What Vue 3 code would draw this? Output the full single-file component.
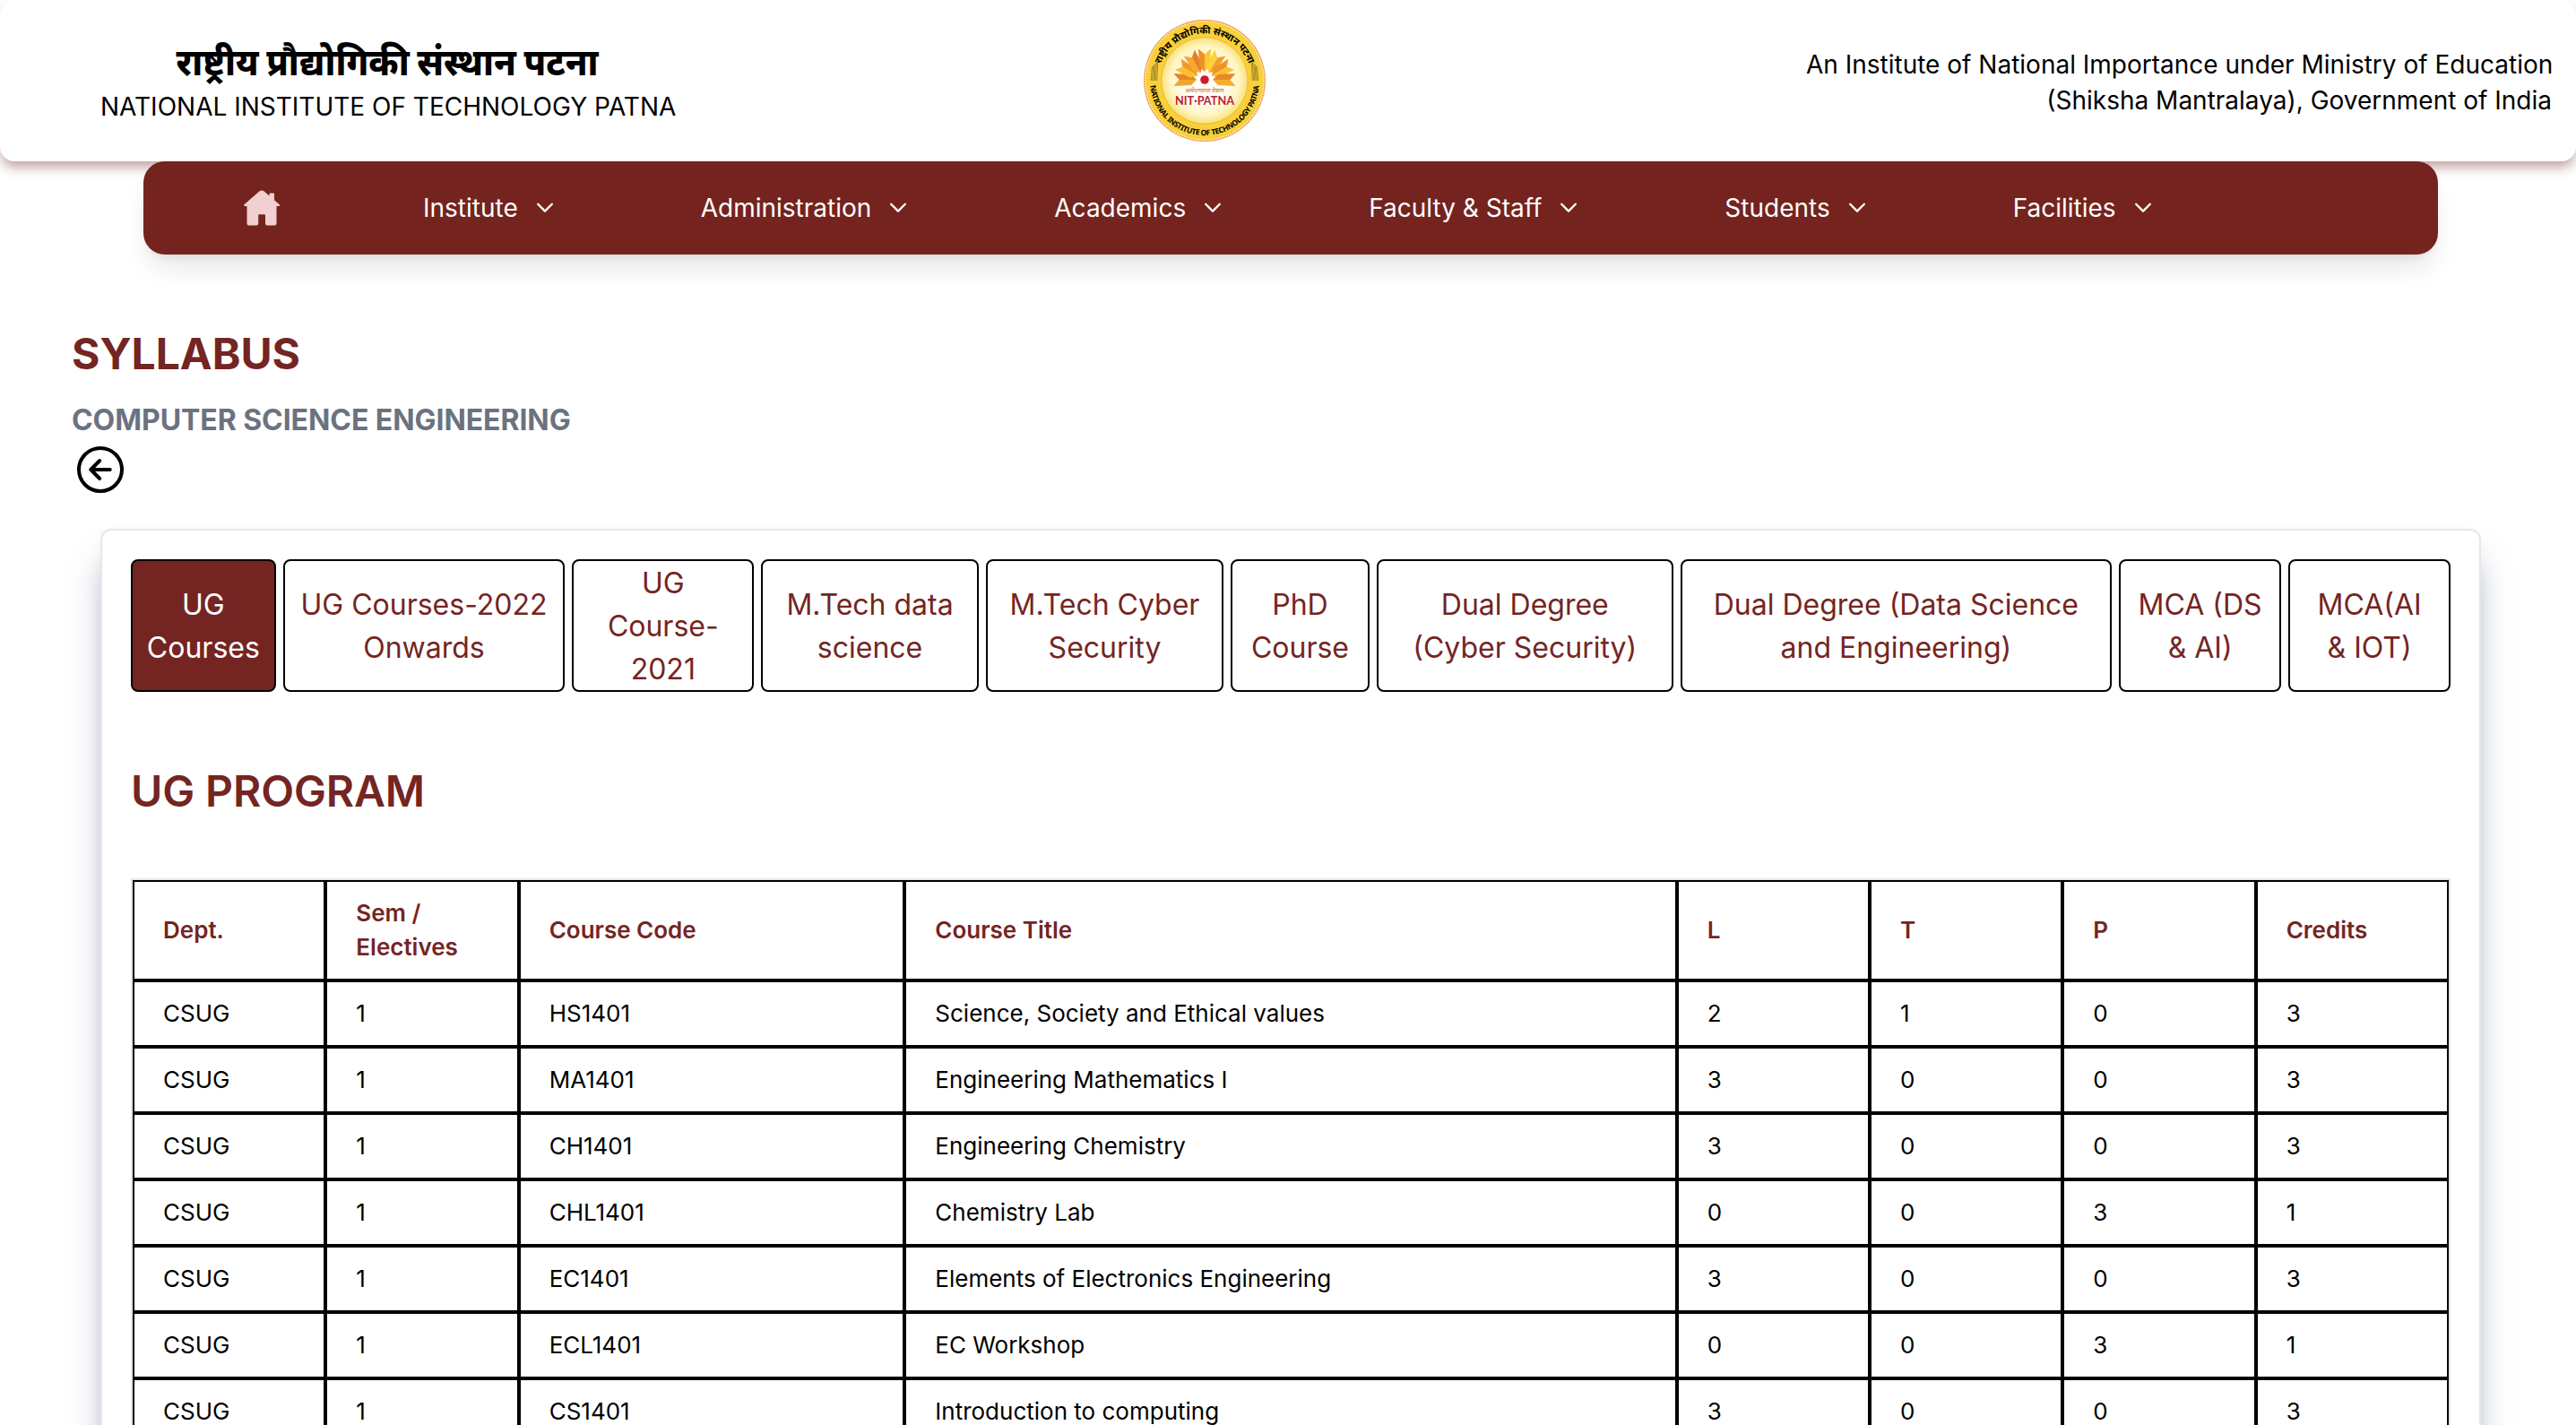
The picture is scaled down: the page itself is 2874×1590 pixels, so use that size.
<script setup>
const menus = ['Institute', 'Administration', 'Academics', 'Faculty & Staff', 'Students', 'Facilities']

const tabs = [
  ['UG', 'Courses'],
  ['UG Courses-2022', 'Onwards'],
  ['UG', 'Course-', '2021'],
  ['M.Tech data', 'science'],
  ['M.Tech Cyber', 'Security'],
  ['PhD', 'Course'],
  ['Dual Degree', '(Cyber Security)'],
  ['Dual Degree (Data Science', 'and Engineering)'],
  ['MCA (DS', '& AI)'],
  ['MCA(AI', '& IOT)'],
]

const columns = ['Dept.', 'Sem / Electives', 'Course Code', 'Course Title', 'L', 'T', 'P', 'Credits']

const courses = [
  ['CSUG', '1', 'HS1401', 'Science, Society and Ethical values', '2', '1', '0', '3'],
  ['CSUG', '1', 'MA1401', 'Engineering Mathematics I', '3', '0', '0', '3'],
  ['CSUG', '1', 'CH1401', 'Engineering Chemistry', '3', '0', '0', '3'],
  ['CSUG', '1', 'CHL1401', 'Chemistry Lab', '0', '0', '3', '1'],
  ['CSUG', '1', 'EC1401', 'Elements of Electronics Engineering', '3', '0', '0', '3'],
  ['CSUG', '1', 'ECL1401', 'EC Workshop', '0', '0', '3', '1'],
  ['CSUG', '1', 'CS1401', 'Introduction to computing', '3', '0', '0', '3'],
]

// Lotus petals of the emblem: rotation in degrees and the two facet colours
const petals = [
  [-90, '#f3a52c', '#e8862a'],
  [-60, '#fbc02f', '#f09a2a'],
  [-30, '#f6a82c', '#e57f26'],
  [0, '#ee8f2b', '#fcc932'],
  [30, '#fdd23a', '#f2a02c'],
  [60, '#ee942a', '#fbc233'],
  [90, '#e98829', '#f6ad2f'],
]
</script>

<template>
  <div class="page">
    <header class="header">
      <div class="brand">
        <div class="brand-hi">राष्ट्रीय प्रौद्योगिकी संस्थान पटना</div>
        <div class="brand-en">NATIONAL INSTITUTE OF TECHNOLOGY PATNA</div>
      </div>
      <svg class="emblem" viewBox="-69 -69 138 138">
        <defs>
          <radialGradient id="glow">
            <stop offset="0.45" stop-color="#fffef8" />
            <stop offset="0.8" stop-color="#fff6c4" />
            <stop offset="1" stop-color="#fbe27a" />
          </radialGradient>
          <path id="arcTop" d="M-52.500 0A52.500 52.500 0 0 1 52.500 0" />
          <path id="arcBottom" d="M-61 0A61 61 0 0 0 61 0" />
        </defs>
        <circle r="68" fill="#f0a050" />
        <circle r="66.2" fill="#f9cf3a" stroke="#fff3d2" stroke-width="1.4" stroke-dasharray="1.6 1.2" />
        <circle r="48" fill="url(#glow)" stroke="#d9a62c" stroke-width="1" stroke-dasharray="1.4 1" />
        <g transform="translate(0 -1)">
          <g v-for="p in petals" :key="p[0]" :transform="`rotate(${p[0]})`">
            <path d="M0-9L-6-15-7-34.500 0-28.500Z" :fill="p[1]" />
            <path d="M0-9L6-15 7-34.500 0-28.500Z" :fill="p[2]" />
          </g>
          <circle r="4.8" fill="#c8202c" />
        </g>
        <text class="motto" y="12.800" text-anchor="middle" textLength="43" lengthAdjust="spacingAndGlyphs">श्रमोऽनवरत चेष्टाय</text>
        <text class="nit" y="26.500" text-anchor="middle" textLength="66" lengthAdjust="spacingAndGlyphs">NIT·PATNA</text>
        <g stroke="#a98c2c" stroke-width="1">
          <path v-for="n in 6" :key="n" :d="`M${-60 + n * 1.3} ${-14 - n * 1.4}L${-61 + n * 1.3} 0M${60 - n * 1.3} ${-14 - n * 1.4}L${61 - n * 1.3} 0`" />
        </g>
        <text class="ring-hi"><textPath href="#arcTop" startOffset="50%" text-anchor="middle">राष्ट्रीय प्रौद्योगिकी संस्थान पटना</textPath></text>
        <text class="ring-en"><textPath href="#arcBottom" startOffset="50%" text-anchor="middle" textLength="180">NATIONAL INSTITUTE OF TECHNOLOGY PATNA</textPath></text>
      </svg>
      <p class="ministry">
        An Institute of National Importance under Ministry of Education<br />
        (Shiksha Mantralaya), Government of India
      </p>
    </header>

    <nav class="nav">
      <svg class="home" viewBox="10 8 41 40">
        <path d="M27.600 9.300Q30 7.800 32.400 9.300L38.500 14.600V12.600Q38.500 11.600 39.500 11.600H43Q44 11.600 44 12.600V19.300L49.800 24.300Q50.700 25.800 49.200 26H46.500V45.500Q46.500 47.600 44.400 47.600H36Q34 47.600 34 45.500V36.500Q34 35.300 33 35.300H27.200Q26.200 35.300 26.200 36.500V45.500Q26.200 47.600 24.200 47.600H15.600Q13.500 47.600 13.500 45.500V26H11Q9.600 25.800 10.400 24.300Z" />
      </svg>
      <div v-for="m in menus" :key="m" class="menu">
        <span>{{ m }}</span>
        <svg class="chevron" viewBox="0 0 18 12"><path d="M1.200 1.700 9 9.600 16.800 1.700" /></svg>
      </div>
    </nav>

    <main class="main">
      <h1>SYLLABUS</h1>
      <h2>COMPUTER SCIENCE ENGINEERING</h2>
      <svg class="back" viewBox="0 0 512 512">
        <path d="M448 256c0-106-86-192-192-192S64 150 64 256s86 192 192 192 192-86 192-192Z" />
        <path d="M249.380 336 170 256l79.380-80M181.030 256H342" />
      </svg>

      <section class="card">
        <div class="tabs">
          <button v-for="(t, i) in tabs" :key="i" class="tab" :class="{ active: i === 0 }">
            <span v-for="line in t" :key="line">{{ line }}</span>
          </button>
        </div>
        <h3>UG PROGRAM</h3>
        <div class="table">
          <div class="row head">
            <div v-for="c in columns" :key="c" class="cell">{{ c }}</div>
          </div>
          <div v-for="r in courses" :key="r[2]" class="row">
            <div v-for="(v, i) in r" :key="i" class="cell">{{ v }}</div>
          </div>
        </div>
      </section>
    </main>
  </div>
</template>

<style>
body {
  margin: 0;
  background: #fff;
}
</style>

<style scoped>
.page {
  height: 1590px;
  overflow: hidden;
  font-family: Inter, 'Noto Sans Devanagari', 'Noto Sans', sans-serif;
  color: #000;
}
.header {
  position: relative;
  box-sizing: border-box;
  height: 180px;
  padding: 0 27px 0 112px;
  display: grid;
  grid-template-columns: 640px 1fr 832px;
  align-items: center;
  background: #fff;
  border-radius: 16px;
  box-shadow: 0 8px 14px -2px rgba(116, 35, 30, 0.45);
}
.brand {
  text-align: center;
  white-space: nowrap;
  padding-top: 5px;
}
.brand-hi {
  font-size: 42px;
  line-height: 54px;
  font-weight: 800;
  transform: scaleX(0.935);
}
.brand-en {
  font-size: 28px;
  line-height: 47px;
}
.emblem {
  width: 138px;
  height: 138px;
  margin-left: 523px;
}
.motto {
  font-size: 6px;
  font-weight: 600;
  fill: #d98a3a;
}
.nit {
  font-family: Lato, sans-serif;
  font-size: 14px;
  font-weight: 700;
  fill: #b8203a;
}
.ring-hi {
  font-size: 10.8px;
  font-weight: 700;
}
.ring-en {
  font-family: 'Noto Sans', sans-serif;
  font-size: 8.5px;
  font-weight: 700;
}
.ministry {
  margin: 0;
  padding-top: 4px;
  font-size: 28px;
  line-height: 40px;
  text-align: right;
  white-space: nowrap;
}
.nav {
  position: relative;
  box-sizing: border-box;
  height: 104px;
  margin: 0 154px 0 160px;
  padding-left: 112px;
  display: flex;
  align-items: center;
  background: #74231e;
  color: #fff;
  border-radius: 24px;
  box-shadow: 0 20px 30px -6px rgba(0, 0, 0, 0.1), 0 8px 12px -8px rgba(0, 0, 0, 0.1);
}
.home {
  width: 41px;
  height: 40px;
  margin: 0 159px 0 0;
  fill: #f0d0d0;
}
.menu {
  display: flex;
  align-items: center;
  gap: 21px;
  margin-right: 165px;
  font-size: 28px;
  line-height: 40px;
  font-weight: 400;
  white-space: nowrap;
}
.chevron {
  width: 18px;
  height: 12px;
  fill: none;
  stroke: #fff;
  stroke-width: 2.3;
  stroke-linecap: round;
  stroke-linejoin: round;
}
.main {
  padding: 79px 106px 0 80px;
}
h1,
h3 {
  margin: 0;
  font-size: 48px;
  line-height: 64px;
  font-weight: 700;
  color: #742522;
}
h2 {
  margin: 18px 0 -1px;
  font-size: 32px;
  line-height: 48px;
  font-weight: 700;
  letter-spacing: -0.06px;
  color: #6b7280;
}
.back {
  display: block;
  width: 64px;
  height: 64px;
  fill: none;
  stroke: #000;
  stroke-width: 32;
  stroke-linecap: round;
  stroke-linejoin: round;
}
.card {
  box-sizing: border-box;
  height: 1400px;
  margin: 34px 0 0 32px;
  padding: 32px;
  border: 2px solid #e5e7eb;
  border-radius: 12px;
  background: #fff;
  box-shadow: 0 36px 36px -4px rgba(100, 116, 155, 0.5), 0 4px 16px rgba(0, 0, 0, 0.03);
}
.tabs {
  display: grid;
  grid-template-columns: 161.7px 314.6px 203px 242.5px 265.4px 154.6px 331px 481.2px 181.3px 1fr;
  gap: 8px;
}
.tab {
  box-sizing: border-box;
  height: 148px;
  padding: 2px 0 0;
  display: flex;
  flex-direction: column;
  justify-content: center;
  border: 2px solid #000;
  border-radius: 8px;
  background: #fff;
  color: #742522;
  font: 400 32px/48px Inter, sans-serif;
  text-align: center;
  white-space: nowrap;
}
.tab.active {
  background: #742522;
  color: #fff;
}
h3 {
  margin: 79px 0 65px;
  font-weight: 600;
  letter-spacing: -0.1px;
}
.table {
  border: 2px solid #e5e7eb;
  font-size: 26px;
  line-height: 38px;
}
.row {
  display: grid;
  grid-template-columns: 1fr 1fr 2fr 4fr 1fr 1fr 1fr 1fr;
}
.cell {
  box-sizing: border-box;
  min-width: 0;
  min-height: 74px;
  padding: 16px 32px;
  display: flex;
  align-items: center;
  border: 2px solid #000;
}
.head {
  font-weight: 600;
  color: #742522;
}
</style>
